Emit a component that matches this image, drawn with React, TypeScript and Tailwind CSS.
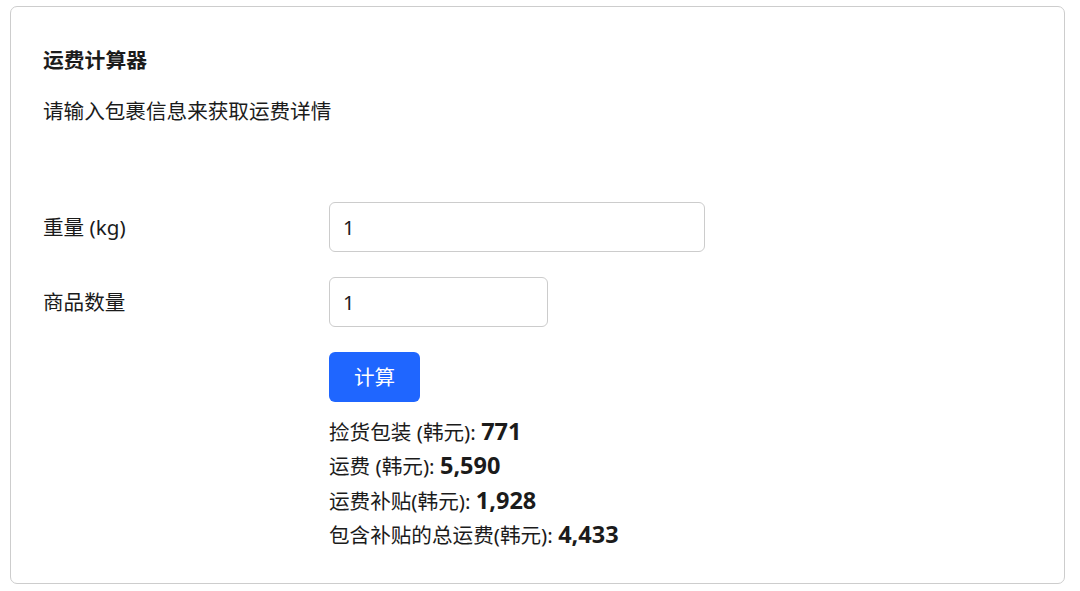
import { useState } from 'react';

const font = 'font-["Noto_Sans","Noto_Sans_CJK_SC",sans-serif]';

export default function App() {
  const [weight, setWeight] = useState('1');
  const [qty, setQty] = useState('1');

  return (
    <div className={`${font} w-[1080px] h-[591px] bg-white pl-[10px] pt-[6px] text-[#1b1b1b]`}>
      <div className="w-[1055px] h-[578px] border-[1.5px] border-[#cdcdcd] rounded-[7px] pl-[32px] pt-[39px]">
        <h2 className="text-[20.8px] leading-[28px] font-bold">运费计算器</h2>
        <p className="mt-[23px] text-[20.6px] leading-[28px]">请输入包裹信息来获取运费详情</p>

        <div className="mt-[77px] flex items-center">
          <label className="w-[286px] text-[20.6px] leading-[28px]">重量 (kg)</label>
          <input
            value={weight}
            onChange={e => setWeight(e.target.value)}
            className="w-[376px] h-[50px] border-[1.5px] border-[#cccccc] rounded-[6px] px-[13px] text-[20px] outline-none"
          />
        </div>

        <div className="mt-[25px] flex items-center">
          <label className="w-[286px] text-[20.6px] leading-[28px]">商品数量</label>
          <input
            value={qty}
            onChange={e => setQty(e.target.value)}
            className="w-[219px] h-[50px] border-[1.5px] border-[#cccccc] rounded-[6px] px-[13px] text-[20px] outline-none"
          />
        </div>

        <div className="ml-[286px]">
          <button className="mt-[25px] w-[91px] h-[50px] rounded-[6px] bg-[#1f66ff] text-white text-[20.6px]">计算</button>

          <div className="mt-[13px] text-[20.6px] leading-[33.3px]">
            <div>捡货包装 (韩元): <span className="font-bold text-[23.5px]">771</span></div>
            <div>运费 (韩元): <span className="font-bold text-[23.5px]">5,590</span></div>
            <div>运费补贴(韩元): <span className="font-bold text-[23.5px]">1,928</span></div>
            <div>包含补贴的总运费(韩元): <span className="font-bold text-[23.5px]">4,433</span></div>
          </div>
        </div>
      </div>
    </div>
  );
}
